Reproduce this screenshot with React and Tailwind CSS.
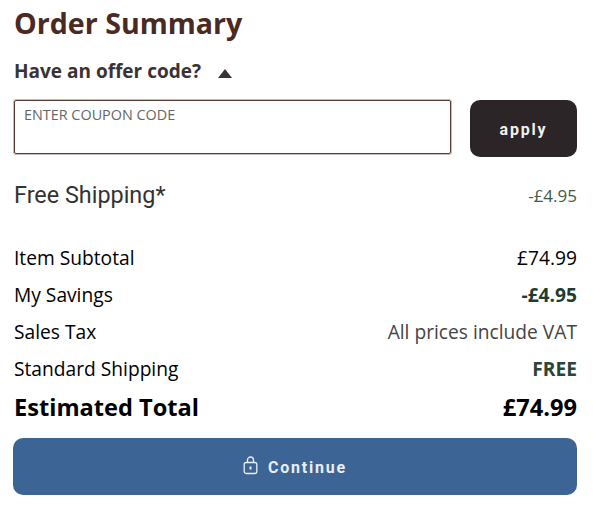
import React from 'react';

const rows = [
  { label: 'Item Subtotal', value: '£74.99', cls: 'text-black' },
  { label: 'My Savings', value: '-£4.95', cls: 'font-bold text-[#1f3d2f]' },
  { label: 'Sales Tax', value: 'All prices include VAT', cls: 'text-[#444]' },
  { label: 'Standard Shipping', value: 'FREE', cls: 'font-bold text-[#2a4636]' },
];

const LockIcon = () => (
  <svg width="15" height="19" viewBox="0 0 15 19" fill="none" stroke="currentColor" strokeWidth="1.3" className="mb-[5px]">
    <rect x="1.2" y="6.5" width="12.6" height="11" rx="2" />
    <path d="M4.5 6.5V4a3 3 0 0 1 6 0v2.500" />
    <rect x="6.500" y="10.500" width="2" height="3" fill="currentColor" stroke="none" />
  </svg>
);

export default function App() {
  return (
    <div className="w-[606px] h-[520px] bg-white pl-[14px] pr-[29px] font-['Open_Sans',sans-serif] overflow-hidden">
      <h1 className="text-[28.6px] leading-[40px] font-bold text-[#4a2a22] pt-[3px] h-[46px]">Order Summary</h1>
      <div className="flex items-center gap-[17px] mt-[10px] h-[30px]">
        <span className="text-[19px] font-bold text-[#3a3335]">Have an offer code?</span>
        <span className="w-0 h-0 mt-[4px] border-x-[7px] border-x-transparent border-b-[9px] border-b-[#3a3335]" />
      </div>
      <div className="flex justify-between mt-[14px] items-start">
        <div className="w-[437px] h-[54px] border border-[#5a3a34] rounded-[2px] shadow-[0_0_0_1px_#c9bdbb] px-[9px] pt-[5px] text-[14.4px] leading-[18px] text-[#666]">ENTER COUPON CODE</div>
        <button className="w-[107px] h-[57px] pt-[2px] rounded-[10px] bg-[#2b2527] text-[#f0f0f0] text-[16px] font-bold tracking-[1.8px] font-['Roboto',sans-serif]">apply</button>
      </div>
      <div className="flex justify-between items-center mt-[21px] h-[36px]">
        <span className="text-[23.4px] text-[#333] font-['Roboto',sans-serif]">Free Shipping*</span>
        <span className="text-[17px] text-[#3f5a48]">-£4.95</span>
      </div>
      <div className="mt-[26px] flex flex-col">
        {rows.map((r) => (
          <div key={r.label} className="flex justify-between items-center h-[37px] text-[19.2px] text-black">
            <span>{r.label}</span>
            <span className={r.cls}>{r.value}</span>
          </div>
        ))}
      </div>
      <div className="flex justify-between items-center h-[39px] text-[23.6px] font-bold text-black">
        <span>Estimated Total</span>
        <span>£74.99</span>
      </div>
      <button className="w-[564px] -ml-px h-[57px] mt-[11px] pt-[3px] rounded-[10px] bg-[#3c6595] text-[#e8eef5] flex items-center justify-center gap-[10px] text-[16px] font-bold tracking-[1.8px] font-['Roboto',sans-serif]">
        <LockIcon />
        Continue
      </button>
    </div>
  );
}
